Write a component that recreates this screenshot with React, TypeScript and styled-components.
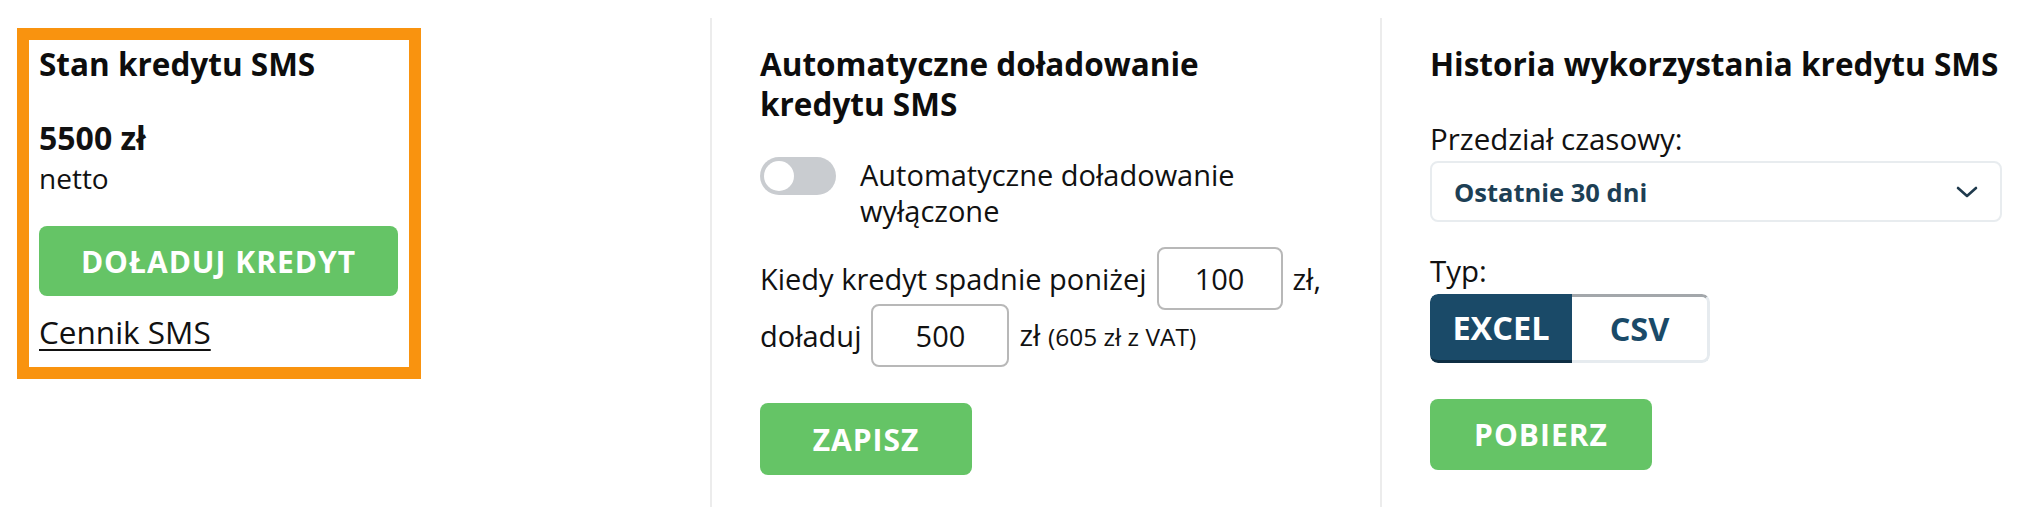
import styled, { createGlobalStyle } from "styled-components";

const GlobalStyle = createGlobalStyle`
   body {
      margin: 0;
      background: #ffffff;
      font-family: "Open Sans", "Noto Sans", sans-serif;
      color: #111111;
   }
`;

const green = "#65c466";
const navy = "#1a4a68";

function ChevronDown() {
   return (
      <svg width="22" height="12" viewBox="0 0 22 12" fill="none">
         <path
            d="M2 2l9 8 9-8"
            stroke="#1f3a4d"
            strokeWidth="2.6"
            strokeLinecap="round"
            strokeLinejoin="round"
         />
      </svg>
   );
}

export default function App() {
   return (
      <>
         <GlobalStyle />
         <Page>
            <CreditColumn>
               <HighlightCard>
                  <Heading>Stan kredytu SMS</Heading>
                  <Amount>5500 zł</Amount>
                  <Text>netto</Text>
                  <GreenButton $width="100%" $height={70}>
                     Doładuj kredyt
                  </GreenButton>
                  <PriceLink href="#">Cennik SMS</PriceLink>
               </HighlightCard>
            </CreditColumn>

            <Column $width={670}>
               <Heading $maxWidth={470}>
                  Automatyczne doładowanie kredytu SMS
               </Heading>
               <ToggleRow>
                  <Toggle>
                     <Knob />
                  </Toggle>
                  <ToggleLabel>Automatyczne doładowanie wyłączone</ToggleLabel>
               </ToggleRow>
               <AmountRow $first>
                  <span>Kiedy kredyt spadnie poniżej</span>
                  <AmountInput $width={126} defaultValue="100" />
                  <span>zł,</span>
               </AmountRow>
               <AmountRow>
                  <span>doładuj</span>
                  <AmountInput $width={138} defaultValue="500" />
                  <span>
                     zł <Small>(605 zł z VAT)</Small>
                  </span>
               </AmountRow>
               <GreenButton $width="212px" $height={72} $top={39}>
                  Zapisz
               </GreenButton>
            </Column>

            <Column>
               <Heading $nowrap>Historia wykorzystania kredytu SMS</Heading>
               <FieldLabel $top={35}>Przedział czasowy:</FieldLabel>
               <Select>
                  <span>Ostatnie 30 dni</span>
                  <ChevronDown />
               </Select>
               <FieldLabel $top={29}>Typ:</FieldLabel>
               <Segmented>
                  <Segment $active>EXCEL</Segment>
                  <Segment>CSV</Segment>
               </Segmented>
               <GreenButton $width="222px" $height={71} $top={36}>
                  Pobierz
               </GreenButton>
            </Column>
         </Page>
      </>
   );
}

const Page = styled.div`
   display: flex;
   padding-top: 18px;
   width: 2032px;
   box-sizing: border-box;
`;

const CreditColumn = styled.div`
   width: 710px;
   flex-shrink: 0;
   padding: 10px 0 0 17px;
   box-sizing: border-box;
`;

const HighlightCard = styled.div`
   width: 404px;
   box-sizing: border-box;
   border: 12px solid #f9930f;
   padding: 4px 11px 15px 10px;
   display: flex;
   flex-direction: column;
`;

const Column = styled.div<{ $width?: number }>`
   ${({ $width }) => ($width ? `width: ${$width}px; flex-shrink: 0;` : "flex: 1;")}
   height: 489px;
   box-sizing: border-box;
   border-left: 2px solid #ececec;
   padding: 26px 30px 0 48px;
   display: flex;
   flex-direction: column;
   align-items: flex-start;
`;

const Heading = styled.h2<{ $maxWidth?: number; $nowrap?: boolean }>`
   margin: 0;
   font-size: 31.5px;
   line-height: 40px;
   font-weight: 700;
   color: #0d0d0d;
   ${({ $maxWidth }) => $maxWidth && `max-width: ${$maxWidth}px;`}
   ${({ $nowrap }) => $nowrap && `white-space: nowrap;`}
`;

const Amount = styled.div`
   margin-top: 34px;
   font-size: 32px;
   line-height: 40px;
   font-weight: 700;
`;

const Text = styled.div`
   font-size: 28px;
   line-height: 40px;
`;

const GreenButton = styled.button<{ $width: string; $height: number; $top?: number }>`
   width: ${({ $width }) => $width};
   height: ${({ $height }) => $height}px;
   margin-top: ${({ $top }) => $top ?? 28}px;
   border: none;
   border-radius: 8px;
   background: ${green};
   color: #ffffff;
   font-family: "Open Sans", sans-serif;
   font-size: 30px;
   font-weight: 700;
   letter-spacing: 1px;
   text-transform: uppercase;
   cursor: pointer;
`;

const PriceLink = styled.a`
   margin-top: 16px;
   font-size: 31.5px;
   line-height: 40px;
   color: #111111;
   text-decoration: underline;
   text-underline-offset: 5px;
   text-decoration-thickness: 2px;
   align-self: flex-start;
`;

const ToggleRow = styled.div`
   display: flex;
   align-items: flex-start;
   gap: 24px;
   margin-top: 33px;
`;

const Toggle = styled.div`
   position: relative;
   width: 76px;
   height: 38px;
   border-radius: 19px;
   background: #c9ccd0;
   flex-shrink: 0;
`;

const Knob = styled.span`
   position: absolute;
   left: 4px;
   top: 4px;
   width: 30px;
   height: 30px;
   border-radius: 50%;
   background: #ffffff;
`;

const ToggleLabel = styled.div`
   font-size: 29px;
   line-height: 36px;
   max-width: 430px;
`;

const AmountRow = styled.div<{ $first?: boolean }>`
   display: flex;
   align-items: center;
   gap: 10px;
   height: 57px;
   margin-top: ${({ $first }) => ($first ? 21 : 0)}px;
   font-size: 29px;
   line-height: 40px;
   white-space: nowrap;
`;

const AmountInput = styled.input<{ $width: number }>`
   width: ${({ $width }) => $width}px;
   height: 63px;
   margin: -3px 0;
   box-sizing: border-box;
   border: 2px solid #b8b8b8;
   border-radius: 8px;
   font-family: "Open Sans", sans-serif;
   font-size: 29px;
   color: #111111;
   text-align: center;
   outline: none;
`;

const Small = styled.span`
   font-size: 24.5px;
`;

const FieldLabel = styled.div<{ $top: number }>`
   margin-top: ${({ $top }) => $top}px;
   font-size: 29.5px;
   line-height: 40px;
`;

const Select = styled.div`
   margin-top: 2px;
   width: 100%;
   height: 61px;
   box-sizing: border-box;
   border: 2px solid #e8ecef;
   border-radius: 8px;
   padding: 0 22px 0 22px;
   display: flex;
   align-items: center;
   justify-content: space-between;
   font-size: 25.5px;
   font-weight: 700;
   color: #1d3f55;
`;

const Segmented = styled.div`
   margin-top: 3px;
   display: flex;
   height: 69px;
   border-radius: 8px;
   overflow: hidden;
`;

const Segment = styled.div<{ $active?: boolean }>`
   width: ${({ $active }) => ($active ? 142 : 138)}px;
   box-sizing: border-box;
   display: flex;
   align-items: center;
   justify-content: center;
   font-size: 32.5px;
   font-weight: 700;
   ${({ $active }) =>
      $active
         ? `
      background: ${navy};
      color: #ffffff;
      border-bottom: 3px solid #0f2f44;
      border-radius: 8px 0 0 8px;
   `
         : `
      background: #ffffff;
      color: ${navy};
      border: 3px solid #e6ebef;
      border-top-color: #a3a7ab;
      border-left: none;
      border-radius: 0 8px 8px 0;
   `}
`;
